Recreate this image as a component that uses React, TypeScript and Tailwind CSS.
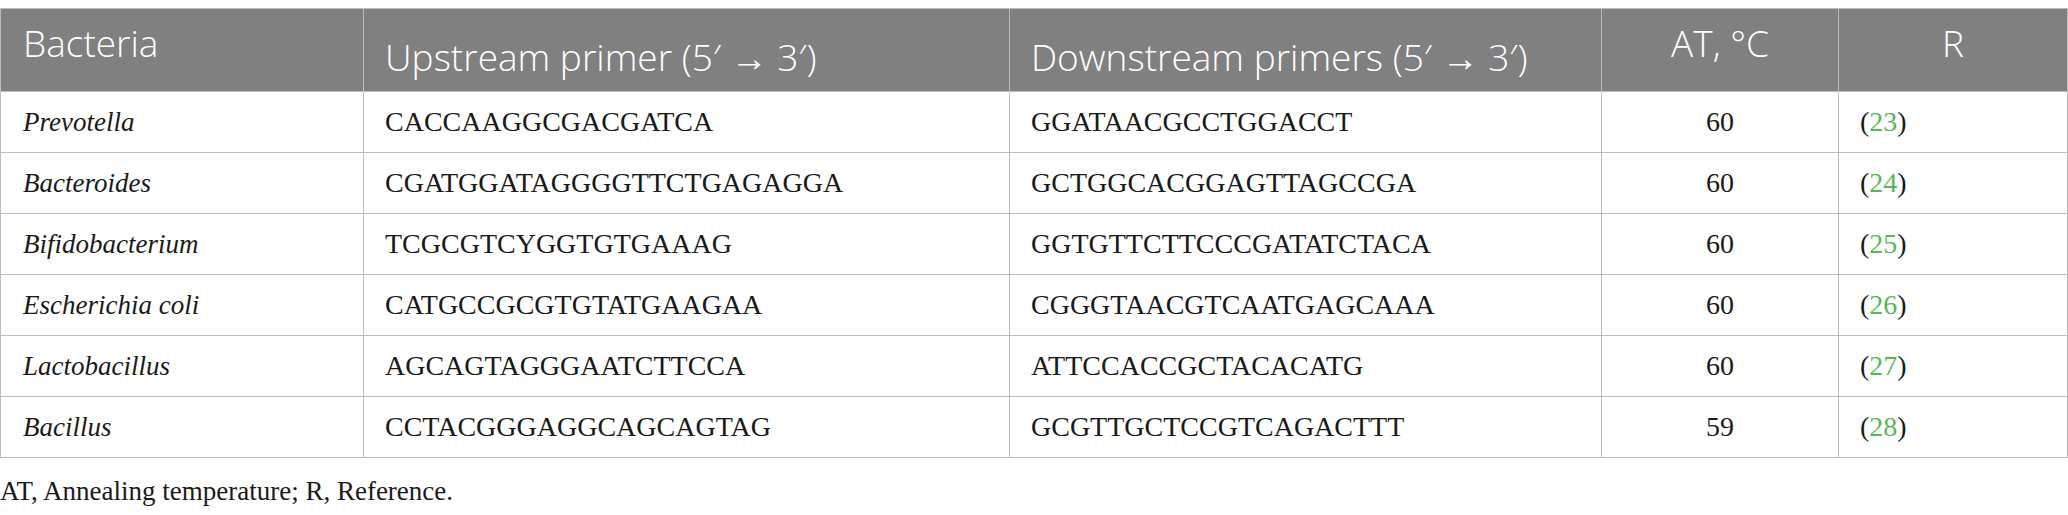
const rows = [
  { name: "Prevotella", up: "CACCAAGGCGACGATCA", down: "GGATAACGCCTGGACCT", at: "60", ref: "23" },
  { name: "Bacteroides", up: "CGATGGATAGGGGTTCTGAGAGGA", down: "GCTGGCACGGAGTTAGCCGA", at: "60", ref: "24" },
  { name: "Bifidobacterium", up: "TCGCGTCYGGTGTGAAAG", down: "GGTGTTCTTCCCGATATCTACA", at: "60", ref: "25" },
  { name: "Escherichia coli", up: "CATGCCGCGTGTATGAAGAA", down: "CGGGTAACGTCAATGAGCAAA", at: "60", ref: "26" },
  { name: "Lactobacillus", up: "AGCAGTAGGGAATCTTCCA", down: "ATTCCACCGCTACACATG", at: "60", ref: "27" },
  { name: "Bacillus", up: "CCTACGGGAGGCAGCAGTAG", down: "GCGTTGCTCCGTCAGACTTT", at: "59", ref: "28" },
];

const App = () => {
  return (
    <div className="w-[2068px] bg-white pt-[8px]">
      <table className="w-full table-fixed border-collapse border border-[#bdbdbd] font-['Liberation_Serif',serif] text-[28px] text-[#1a1a1a]">
        <colgroup>
          <col className="w-[363px]" />
          <col className="w-[646px]" />
          <col className="w-[592px]" />
          <col className="w-[237px]" />
          <col />
        </colgroup>
        <thead>
          <tr className="h-[83px] bg-[#7f807f] font-['Open_Sans',sans-serif] text-[37px] font-light leading-none text-white">
            <th className="border border-[#bdbdbd] pl-[22px] pt-[15px] text-left align-top font-light">Bacteria</th>
            <th className="border border-[#bdbdbd] pl-[21px] pt-[29px] text-left align-top font-light">
              Upstream primer (5′ → 3′)
            </th>
            <th className="border border-[#bdbdbd] pl-[21px] pt-[29px] text-left align-top font-light">
              Downstream primers (5′ → 3′)
            </th>
            <th className="border border-[#bdbdbd] pt-[15px] text-center align-top font-light">AT, °C</th>
            <th className="border border-[#bdbdbd] pt-[15px] text-center align-top font-light">R</th>
          </tr>
        </thead>
        <tbody>
          {rows.map((r) => (
            <tr key={r.name} className="h-[61px]">
              <td className="border border-[#bdbdbd] pl-[22px] text-[27px] italic">{r.name}</td>
              <td className="border border-[#bdbdbd] pl-[21px]">{r.up}</td>
              <td className="border border-[#bdbdbd] pl-[21px]">{r.down}</td>
              <td className="border border-[#bdbdbd] text-center">{r.at}</td>
              <td className="border border-[#bdbdbd] pl-[21px]">
                (<span className="text-[#57b755]">{r.ref}</span>)
              </td>
            </tr>
          ))}
        </tbody>
      </table>
      <p className="mt-[17px] font-['Liberation_Serif',serif] text-[27px] leading-[32px] text-[#1a1a1a]">
        AT, Annealing temperature; R, Reference.
      </p>
    </div>
  );
};

export default App;
